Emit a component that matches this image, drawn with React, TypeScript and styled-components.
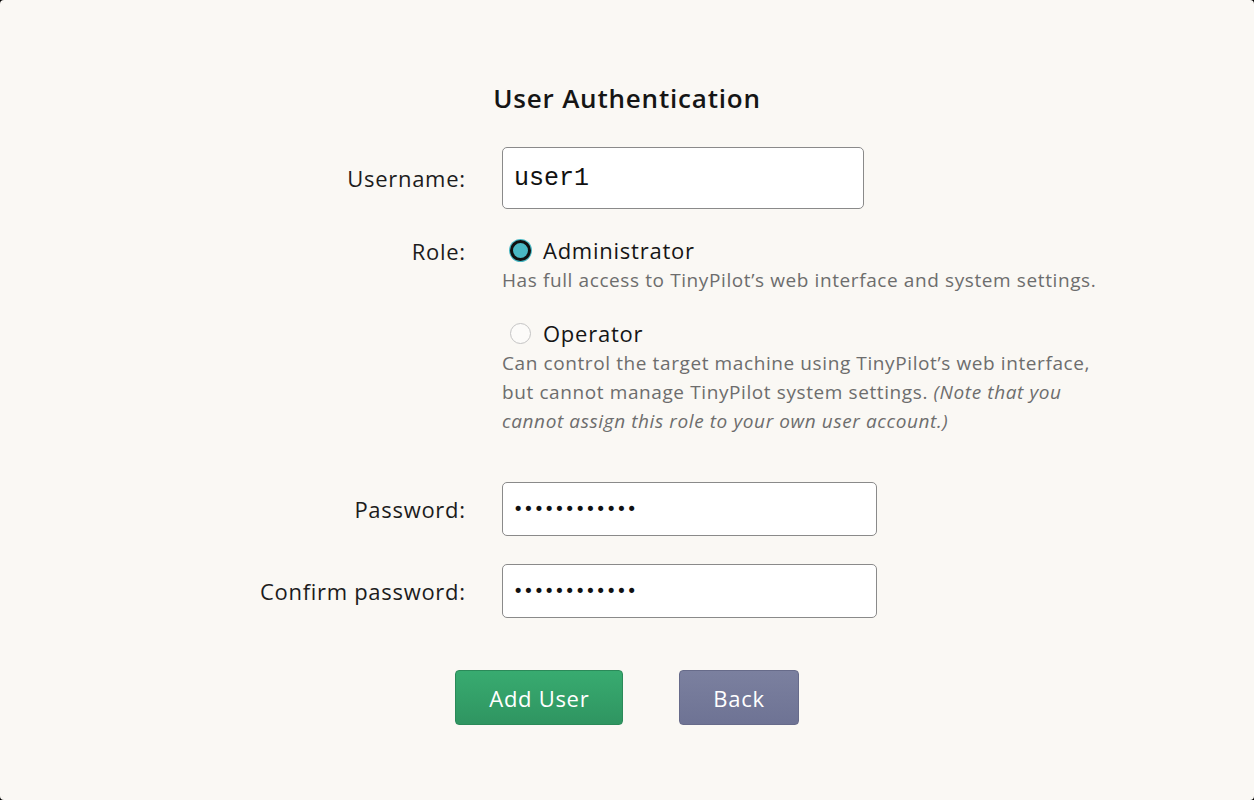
import React from "react";
import styled, { createGlobalStyle } from "styled-components";

const Global = createGlobalStyle`
  html, body { margin: 0; padding: 0; background: #000; }
  body { font-family: "Open Sans", "Noto Sans", sans-serif; }
  * { box-sizing: border-box; }
`;

const Panel = styled.div`
  width: 1254px;
  height: 800px;
  background: #faf8f4;
  border-radius: 4px;
  padding-top: 80px;
  color: #1c1c1c;
`;

const Title = styled.h1`
  margin: 0 0 31px;
  text-align: center;
  font-size: 26px;
  font-weight: 600;
  letter-spacing: 0.8px;
  line-height: 36px;
  color: #151515;
`;

const Form = styled.div`
  display: grid;
  grid-template-columns: 465px 1fr;
  column-gap: 37px;
  align-items: center;
`;

const Label = styled.div<{ $top?: boolean }>`
  text-align: right;
  font-size: 22px;
  letter-spacing: 0.7px;
  line-height: 28px;
  margin-right: -0.7px;
  align-self: ${(p) => (p.$top ? "start" : "center")};
  padding-top: ${(p) => (p.$top ? "28px" : "0")};
`;

const TextInput = styled.input<{ $w: number; $h: number; $mono?: boolean }>`
  width: ${(p) => p.$w}px;
  height: ${(p) => p.$h}px;
  border: 1px solid #8a8a8a;
  border-radius: 5px;
  background: #fff;
  padding: 0 ${(p) => (p.$mono ? "11px" : "10px")};
  font-family: ${(p) => (p.$mono ? `"Liberation Mono", monospace` : `"DejaVu Sans", sans-serif`)};
  font-size: ${(p) => (p.$mono ? "25px" : "17.5px")};
  color: #111;
  outline: none;
`;

const RoleGroup = styled.div`
  padding-top: 25px;
  padding-bottom: 46px;
  display: flex;
  flex-direction: column;
`;

const Option = styled.label`
  display: flex;
  align-items: center;
  gap: 12px;
  font-size: 22px;
  letter-spacing: 0.75px;
  line-height: 32px;
  color: #151515;
  margin-left: 8px;
`;

const Radio = styled.input`
  appearance: none;
  margin: 0;
  width: 21px;
  height: 21px;
  border-radius: 50%;
  border: 1.5px solid #c4c4c4;
  background: #fcfbf9;
  flex: none;
  &:checked {
    background: #4ab8c4;
    border: 3px solid #111;
    box-shadow: 0 0 0 1px #4ab8c4;
  }
`;

const Desc = styled.p`
  margin: 0 0 22px;
  font-size: 19px;
  letter-spacing: 0.6px;
  line-height: 29px;
  color: #6d6d6d;
  max-width: 602px;
  &:last-child { margin-bottom: 0; }
`;

const Row = styled.div`
  display: contents;
`;

const Spacer = styled.div<{ $h: number }>`
  grid-column: 1 / -1;
  height: ${(p) => p.$h}px;
`;

const Buttons = styled.div`
  display: flex;
  justify-content: center;
  gap: 56px;
  margin-top: 52px;
`;

const Button = styled.button<{ $variant: "green" | "gray" }>`
  height: 55px;
  padding: 0 33px;
  border-radius: 4px;
  font-family: inherit;
  font-size: 22px;
  letter-spacing: 0.7px;
  color: #fff;
  border: 1px solid ${(p) => (p.$variant === "green" ? "#2b8a59" : "#676b8a")};
  background: ${(p) =>
    p.$variant === "green"
      ? "linear-gradient(#38ab70, #2f9561)"
      : "linear-gradient(#7b809f, #6e7394)"};
`;

export default function App() {
  return (
    <>
      <Global />
      <Panel>
        <Title>User Authentication</Title>
        <Form>
          <Row>
            <Label>Username:</Label>
            <div>
              <TextInput $w={362} $h={62} $mono defaultValue="user1" />
            </div>
          </Row>
          <Row>
            <Label $top>Role:</Label>
            <RoleGroup>
              <Option>
                <Radio type="radio" name="role" defaultChecked />
                Administrator
              </Option>
              <Desc>Has full access to TinyPilot’s web interface and system settings.</Desc>
              <Option>
                <Radio type="radio" name="role" />
                Operator
              </Option>
              <Desc>
                Can control the target machine using TinyPilot’s web interface, but cannot manage
                TinyPilot system settings. <i>(Note that you cannot assign this role to your own user account.)</i>
              </Desc>
            </RoleGroup>
          </Row>
          <Row>
            <Label>Password:</Label>
            <div>
              <TextInput $w={375} $h={54} type="password" defaultValue="passwordpass" />
            </div>
          </Row>
          <Spacer $h={28} />
          <Row>
            <Label>Confirm password:</Label>
            <div>
              <TextInput $w={375} $h={54} type="password" defaultValue="passwordpass" />
            </div>
          </Row>
        </Form>
        <Buttons>
          <Button $variant="green">Add User</Button>
          <Button $variant="gray">Back</Button>
        </Buttons>
      </Panel>
    </>
  );
}
